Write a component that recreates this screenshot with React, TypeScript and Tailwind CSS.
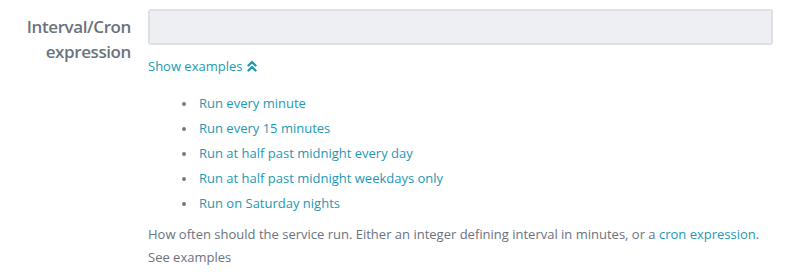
import React from 'react'

const examples = [
  'Run every minute',
  'Run every 15 minutes',
  'Run at half past midnight every day',
  'Run at half past midnight weekdays only',
  'Run on Saturday nights',
]

function ChevronsUp() {
  return (
    <svg width="10" height="12" viewBox="0 0 10 12" className="inline-block ml-[5px] -mt-[3px] align-middle" fill="none">
      <path d="M1.5 5.5 L5 2 L8.5 5.5" stroke="currentColor" strokeWidth="2.4" strokeLinecap="round" strokeLinejoin="round" />
      <path d="M1.5 10.5 L5 7 L8.5 10.5" stroke="currentColor" strokeWidth="2.4" strokeLinecap="round" strokeLinejoin="round" />
    </svg>
  )
}

export default function App() {
  return (
    <div className="w-[786px] h-[274px] bg-white" style={{ fontFamily: '"Open Sans", "Noto Sans", sans-serif' }}>
      <div className="flex pt-[9px]">
        {/* Label */}
        <div className="w-[131px] pt-[5px] text-right text-[17px] leading-[25px] tracking-[-0.4px] font-semibold text-[#6c737d]">
          Interval/Cron
          <br />
          expression
        </div>

        {/* Field */}
        <div className="ml-[17px] w-[625px]">
          <input
            type="text"
            className="block w-full h-[36px] rounded-[3px] border-2 border-[#dfe0e5] bg-[#eeeff3] outline-none"
          />
          <div className="mt-[11px] text-[13px] leading-[20px] text-[#2299b3]">
            Show examples
            <ChevronsUp />
          </div>
          <ul className="mt-[15px] pl-[34px] text-[13px] leading-[25px] text-[#2299b3]">
            {examples.map((e) => (
              <li key={e} className="flex items-center">
                <span className="w-[4px] h-[4px] rounded-full bg-[#737a85] mr-[13px]" />
                {e}
              </li>
            ))}
          </ul>
          <p className="mt-[7px] text-[13px] leading-[23px] text-[#6b7280]">
            How often should the service run. Either an integer defining interval in minutes, or a{' '}
            <span className="text-[#2299b3]">cron expression</span>.
          </p>
          <p className="text-[13px] leading-[23px] text-[#6b7280]">See examples</p>
        </div>
      </div>
    </div>
  )
}
